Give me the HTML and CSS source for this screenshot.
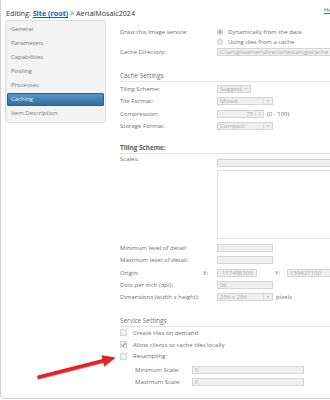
FILE: index.html
```html
<!DOCTYPE html>
<html lang="en">
<head>
    <meta charset="UTF-8">
    <meta name="viewport" content="width=device-width, initial-scale=1.0">
    <title>Caching - AerialMosaic2024</title>
    <link rel="stylesheet" href="styles.css">
</head>
<body>
<div class="frame">

    <!-- Breadcrumb + help -->
    <div class="top">
        <div class="crumb">Editing: <a href="#" class="crumb-link">Site (root)</a> &gt; AerialMosaic2024</div>
        <a href="#" class="help">Help</a>
    </div>

    <div class="layout">
        <!-- Left menu -->
        <ul class="nav">
            <li>General</li>
            <li>Parameters</li>
            <li>Capabilities</li>
            <li>Pooling</li>
            <li>Processes</li>
            <li class="active">Caching</li>
            <li>Item Description</li>
        </ul>

        <!-- Caching panel -->
        <div class="main">
            <div class="row row-draw">
                <span class="label">Draw this image service:</span>
                <div class="radios">
                    <div class="radio-line"><span class="radio on"></span>Dynamically from the data</div>
                    <div class="radio-line"><span class="radio"></span>Using tiles from a cache</div>
                </div>
            </div>
            <div class="row row-dir">
                <span class="label">Cache Directory:</span>
                <div class="field grow">C:\arcgisserver\directories\arcgiscache</div>
            </div>

            <div class="section sec-cache">Cache Settings</div>
            <div class="rows-cache">
                <div class="row row-set">
                    <span class="label">Tiling Scheme:</span>
                    <div class="field select w34">Suggest<span class="caret">&#9662;</span></div>
                </div>
                <div class="row row-set">
                    <span class="label">Tile Format:</span>
                    <div class="field select w56">Mixed<span class="caret">&#9662;</span></div>
                </div>
                <div class="row row-set">
                    <span class="label">Compression:</span>
                    <div class="field spin">75<span class="spin-btn">&#9652;<br>&#9662;</span></div>
                    <span class="after">(0 - 100)</span>
                </div>
                <div class="row row-set">
                    <span class="label">Storage Format:</span>
                    <div class="field select w56">Compact<span class="caret">&#9662;</span></div>
                </div>
            </div>

            <div class="section sec-tiling bold">Tiling Scheme:</div>
            <div class="row row-scales">
                <span class="label">Scales:</span>
                <div class="field grow scales-input"></div>
            </div>
            <div class="scales-box"></div>

            <div class="rows-lod">
                <div class="row row-lod">
                    <span class="label">Minimum level of detail:</span>
                    <div class="field w56"></div>
                </div>
                <div class="row row-lod">
                    <span class="label">Maximum level of detail:</span>
                    <div class="field w56"></div>
                </div>
                <div class="row row-lod">
                    <span class="label label-origin">Origin:<span>X:</span></span>
                    <div class="field w40">-117498300</div>
                    <span class="axis-y">Y:</span>
                    <div class="field grow">139427100</div>
                </div>
                <div class="row row-lod">
                    <span class="label">Dots per inch (dpi):</span>
                    <div class="field w56">96</div>
                </div>
                <div class="row row-lod">
                    <span class="label">Dimensions (width x height):</span>
                    <div class="field select w56">256 x 256<span class="caret">&#9662;</span></div>
                    <span class="after">pixels</span>
                </div>
            </div>

            <div class="section sec-service">Service Settings</div>
            <div class="row row-check"><span class="check"></span>Create tiles on demand</div>
            <div class="row row-check"><span class="check on"><svg viewBox="0 0 7 7" width="7" height="7"><path d="M1.5 3.6 L3 5.1 L5.6 1.8" fill="none" stroke="#9a9a9a" stroke-width="1.1"/></svg></span>Allow clients to cache tiles locally</div>
            <div class="row row-check"><span class="check"></span>Resampling</div>
            <div class="rows-scale">
                <div class="row row-scale">
                    <span class="label label-scale">Minimum Scale:</span>
                    <div class="field w112">0</div>
                </div>
                <div class="row row-scale">
                    <span class="label label-scale">Maximum Scale:</span>
                    <div class="field w112">0</div>
                </div>
            </div>
        </div>
    </div>

    <!-- Red annotation arrow -->
    <svg class="arrow" width="330" height="400" viewBox="0 0 330 400">
        <line x1="39" y1="377" x2="104" y2="360.5" stroke="#e3202b" stroke-width="3.4" stroke-linecap="round"/>
        <polygon points="115.5,357.5 101.5,355.2 104.4,366.2" fill="#e3202b"/>
    </svg>
</div>
</body>
</html>
```

FILE: styles.css
```css
html, body {
    margin: 0;
    overflow: hidden;
    background-color: #fff;
}
body {
    font-family: "Open Sans", Arial, sans-serif;
    font-size: 6px;
    color: #707070;
}
.frame {
    position: relative;
    width: 350px;
    height: 399px;
    box-sizing: border-box;
    border-left: 1px solid #d2d2d2;
    border-bottom: 1px solid #d2d2d2;
    border-bottom-left-radius: 5px;
}
.top {
    display: flex;
    height: 20px;
}
.crumb {
    padding: 8px 0 0 5px;
    line-height: 10px;
    font-size: 7.2px;
    color: #333;
}
.crumb-link {
    color: #1d5e9e;
    font-weight: bold;
}
.help {
    margin: 5px 13px 0 auto;
    line-height: 10px;
    color: #2a6db0;
}
.layout {
    display: flex;
    align-items: flex-start;
}
.nav {
    list-style: none;
    margin: 0 0 0 4px;
    padding: 1px 0 1px 0;
    width: 101px;
    box-sizing: border-box;
    background-color: #f3f3f3;
    border: 1px solid #dedede;
    border-radius: 3px;
}
.nav li {
    height: 13px;
    line-height: 13px;
    margin: 1px 1px;
    padding-left: 4px;
    border-radius: 2px;
    color: #777;
}
.nav li.active {
    background: linear-gradient(#5b97c9, #2f6b9e);
    box-shadow: inset 0 0 0 1px #2b5f8c;
    color: #e8f1f8;
}
.main {
    flex: 1;
    margin-left: 14px;
    padding-top: 7px;
}
.row {
    display: flex;
    align-items: center;
}
.label {
    width: 97px;
    flex: none;
}
.row-draw {
    align-items: flex-start;
    line-height: 10px;
}
.radio-line {
    display: flex;
    align-items: center;
    height: 10px;
}
.radio {
    width: 6px;
    height: 6px;
    box-sizing: border-box;
    border: 1px solid #c4c4c4;
    border-radius: 50%;
    background-color: #eee;
    margin-right: 5px;
}
.radio.on {
    border-color: #b5c2cf;
    background: radial-gradient(circle, #8fa6bd 0 1.3px, #e6ebf0 1.6px);
}
.row-dir {
    height: 10px;
}
.field {
    height: 8px;
    line-height: 6px;
    box-sizing: border-box;
    border: 1px solid #d4d4d4;
    background-color: #efefef;
    color: #ababab;
    padding: 0 2px;
    white-space: nowrap;
    overflow: hidden;
    position: relative;
}
.grow {
    flex: 1;
}
.w34 { width: 34px; }
.w40 { width: 40px; }
.w56 { width: 56px; }
.w112 { width: 112px; }
.select .caret {
    position: absolute;
    right: 0;
    top: 0;
    width: 8px;
    height: 6px;
    border-left: 1px solid #dcdcdc;
    text-align: center;
    font-size: 4px;
    line-height: 6px;
    color: #b4b4b4;
}
.spin {
    width: 47px;
    text-align: right;
    padding-right: 10px;
}
.spin-btn {
    position: absolute;
    right: 0;
    top: 0;
    width: 7px;
    height: 6px;
    border-left: 1px solid #dcdcdc;
    font-size: 3px;
    line-height: 3px;
    text-align: center;
    color: #b4b4b4;
}
.after {
    margin-left: 3px;
}
.section {
    height: 10px;
    line-height: 10px;
    border-bottom: 1px solid #e2e2e2;
    font-size: 6.4px;
    color: #707070;
}
.section.bold {
    font-weight: bold;
    color: #5a5a5a;
}
.sec-cache {
    margin-top: 14px;
}
.rows-cache {
    margin-top: 1.2px;
}
.row-set {
    height: 12.2px;
}
.sec-tiling {
    margin-top: 11px;
}
.row-scales {
    margin-top: 1px;
    height: 11.7px;
    align-items: flex-start;
    line-height: 9px;
}
.scales-input {
    margin-top: 4.3px;
    height: 7.4px;
}
.scales-box {
    margin: 3.3px 0 0 97px;
    height: 69px;
    box-sizing: border-box;
    border: 1px solid #e0e0e0;
    background-color: #fff;
}
.rows-lod {
    margin-top: 2.8px;
}
.row-lod {
    height: 12.4px;
}
.label-origin {
    display: flex;
    justify-content: space-between;
    box-sizing: border-box;
    padding-right: 9px;
}
.axis-y {
    margin: 0 7px 0 18px;
}
.sec-service {
    margin-top: 12.2px;
}
.row-check {
    height: 11.8px;
}
.check {
    width: 7px;
    height: 7px;
    box-sizing: border-box;
    border: 1px solid #d6d6d6;
    background-color: #f2f2f2;
    margin-right: 6px;
    display: flex;
    align-items: center;
    justify-content: center;
}
.check svg {
    flex: none;
}
.rows-scale {
    margin-top: 1.5px;
}
.row-scale {
    height: 12.3px;
}
.label-scale {
    width: 56.7px;
    padding-left: 15px;
}
.arrow {
    position: absolute;
    left: -1px;
    top: 0;
    pointer-events: none;
    filter: drop-shadow(0 1px 0.5px rgba(120, 0, 0, 0.35));
}
```
